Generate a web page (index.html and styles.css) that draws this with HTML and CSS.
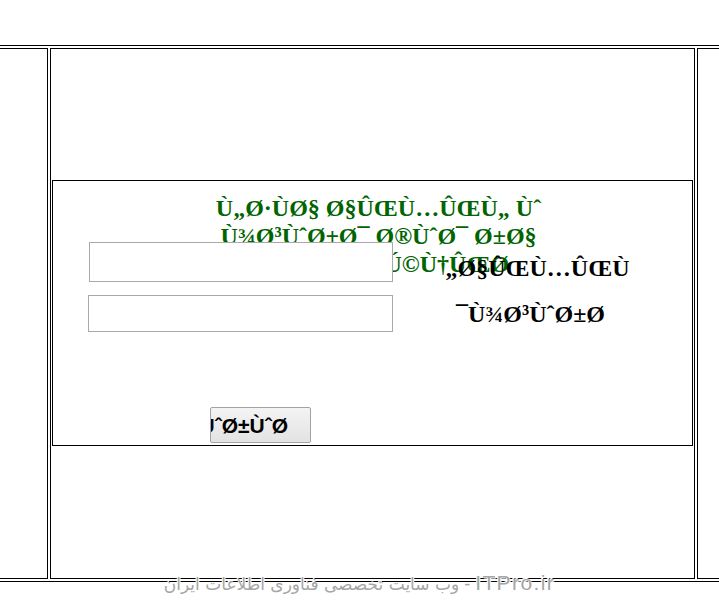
FILE: index.html
```html
<!DOCTYPE html>
<html lang="fa">
<head>
<meta charset="utf-8">
<title>ورود</title>
<link rel="stylesheet" href="styles.css">
</head>
<body>
<div class="page">
  <div class="frame">
    <div class="cell cell-left"></div>
    <div class="cell cell-main">
      <div class="login">
        <div class="title">Ù„Ø·ÙØ§ Ø§ÛŒÙ…ÛŒÙ„ Ùˆ Ù¾Ø³ÙˆØ±Ø¯ Ø®ÙˆØ¯ Ø±Ø§ ÙˆØ§Ø±Ø¯ Ú©Ù†ÛŒØ¯</div>
        <form class="form">
          <div class="col-fields">
            <input class="field field-email" type="text">
            <input class="field field-pass" type="password">
            <button class="submit" type="button"><span>ÙˆØ±ÙˆØ¯</span></button>
          </div>
          <div class="col-labels">
            <div class="label label-email">Ø§ÛŒÙ…ÛŒÙ„</div>
            <div class="label label-pass">Ù¾Ø³ÙˆØ±Ø¯</div>
          </div>
        </form>
      </div>
    </div>
    <div class="cell cell-right"></div>
  </div>
  <div class="watermark"><span class="wm-latin">ITPro.ir</span> - <span class="wm-fa">وب سایت تخصصی فناوری اطلاعات ایران</span></div>
</div>
</body>
</html>
```

FILE: styles.css
```css
html, body {
  margin: 0;
  padding: 0;
  background: #fff;
}

.page {
  position: relative;
  width: 719px;
  height: 613px;
  overflow: hidden;
}

.frame {
  box-sizing: border-box;
  display: flex;
  gap: 2px;
  padding: 2px;
  border: 1px solid #000;
  width: 800px;
  height: 537px;
  margin: 45px 0 0 -40px;
}

.cell {
  box-sizing: border-box;
  border: 1px solid #000;
}

.cell-left { width: 85px; }
.cell-right { width: 60px; }

.cell-main {
  width: 645px;
  padding: 131px 1px 0;
}

.login {
  box-sizing: border-box;
  border: 1px solid #000;
  height: 266px;
  display: grid;
  grid-template-columns: 1fr;
  grid-template-rows: 1fr;
}

.title,
.form {
  grid-area: 1 / 1;
}

.title {
  justify-self: center;
  align-self: start;
  width: 400px;
  margin: 13px 0 0 12px;
  direction: rtl;
  text-align: center;
  font: bold 24px/28px "Liberation Serif", "Times New Roman", serif;
  color: #006400;
}

.form {
  margin: 0;
  padding: 61px 0 0 35px;
  display: flex;
  align-items: flex-start;
}

.col-fields {
  width: 305px;
  display: flex;
  flex-direction: column;
  align-items: flex-start;
}

.field {
  display: block;
  box-sizing: border-box;
  margin: 0;
  padding: 0 4px;
  border: 1px solid #a9a9a9;
  background: #fff;
  outline: none;
}

.field-email {
  width: 304px;
  height: 40px;
  margin-left: 1px;
}

.field-pass {
  width: 305px;
  height: 37px;
  margin-top: 13px;
}

.submit {
  box-sizing: border-box;
  width: 101px;
  height: 36px;
  margin: 75px 0 0 122px;
  padding: 2px 22px 0 0;
  border: 1px solid #a3a3a3;
  border-radius: 2px;
  background: linear-gradient(#f4f4f4, #e3e3e3);
  color: #000;
  font: bold 21px "Liberation Sans", Arial, sans-serif;
  direction: rtl;
  white-space: nowrap;
  overflow: hidden;
  display: flex;
  align-items: center;
  justify-content: flex-start;
}

.submit span {
  flex: none;
}

.col-labels {
  flex: 1;
  padding-right: 16px;
  direction: rtl;
  text-align: center;
}

.label {
  font: bold 24px/28px "Liberation Serif", "Times New Roman", serif;
  color: #000;
}

.label-email {
  margin-top: 12px;
  padding-left: 6px;
}

.label-pass {
  margin-top: 18px;
  padding-right: 8px;
}

.watermark {
  position: absolute;
  left: 0;
  right: 0;
  top: 571px;
  text-align: center;
  font: 18px/23px "Liberation Sans", "DejaVu Sans", sans-serif;
  color: #a6a6a6;
  text-shadow: 1px 1px 0 #fff, -1px -1px 0 #fff;
  white-space: nowrap;
  direction: rtl;
}

.wm-latin {
  font-size: 21px;
  letter-spacing: 1.4px;
}

.wm-fa {
  font-family: "DejaVu Sans", sans-serif;
  font-size: 17px;
}
```
